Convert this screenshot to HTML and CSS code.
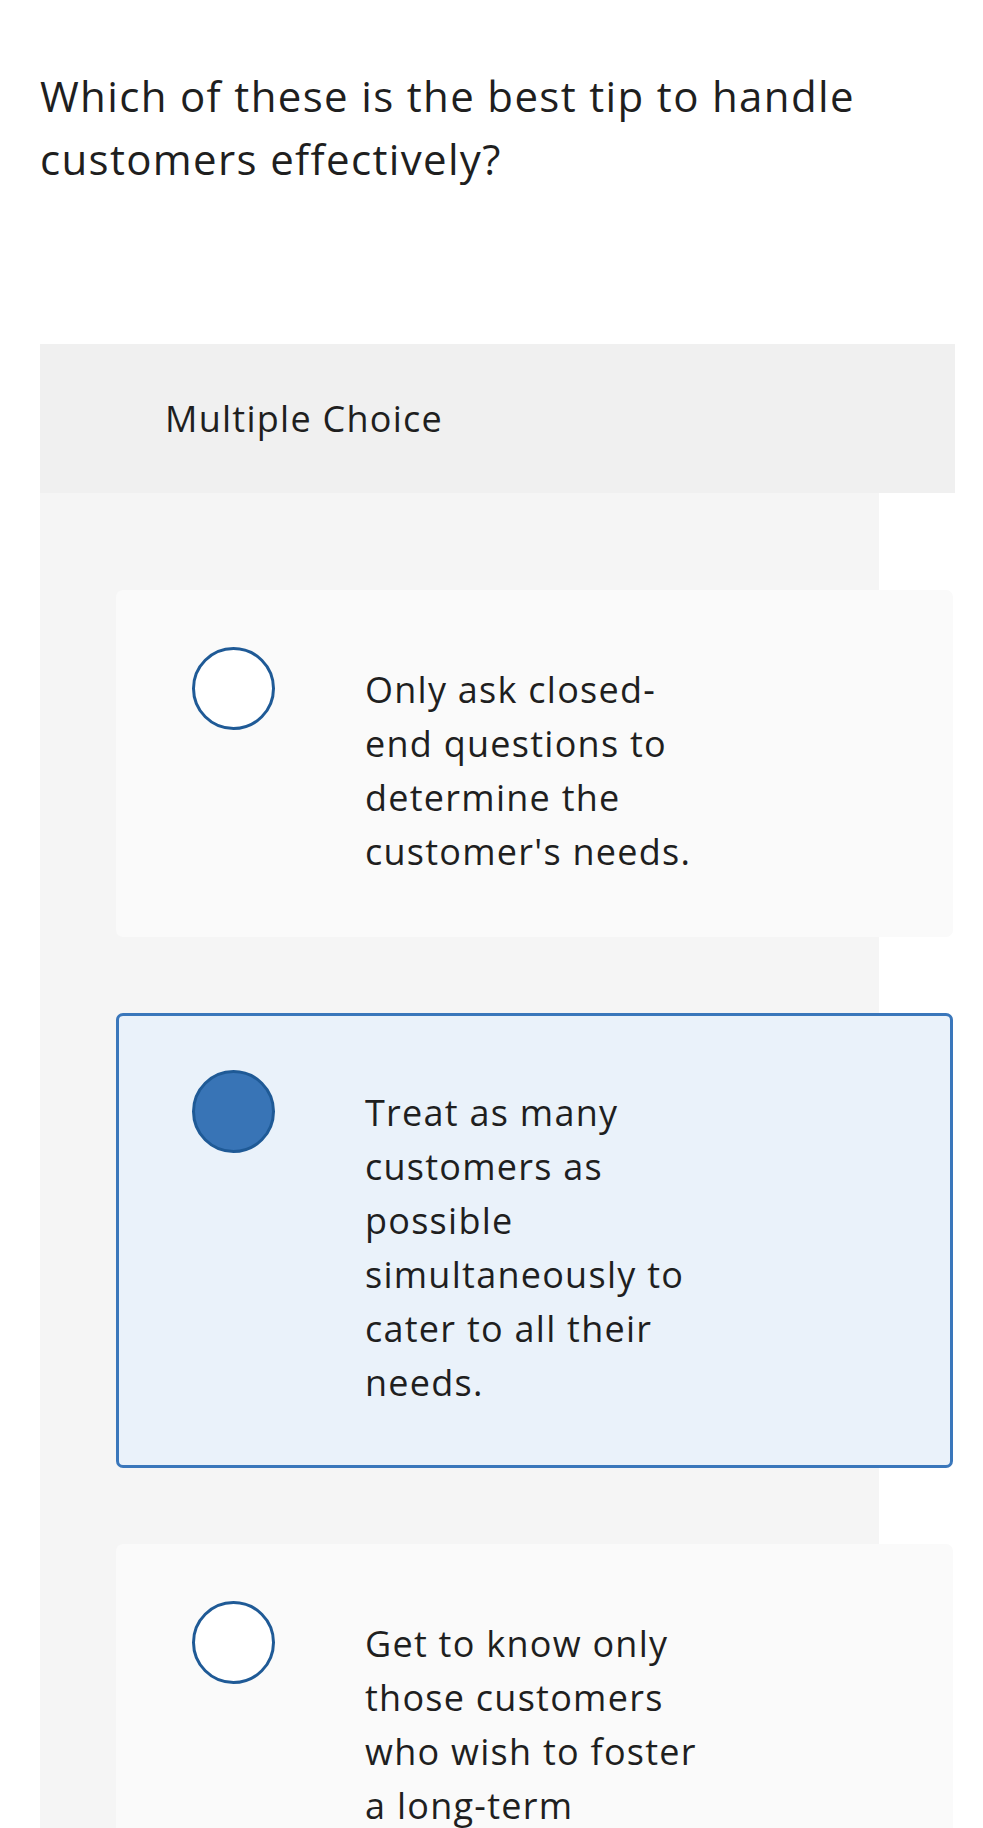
FILE: index.html
```html
<!DOCTYPE html>
<html lang="en">
<head>
<meta charset="utf-8">
<title>Question</title>
<link rel="stylesheet" href="styles.css">
</head>
<body>
<main class="page">
  <h1 class="question">Which of these is the best tip to handle customers effectively?</h1>
  <section class="quiz">
    <div class="quiz-header">Multiple Choice</div>
    <div class="quiz-body">
      <div class="option">
        <span class="radio"></span>
        <span class="option-text">Only ask closed-end questions to determine the customer's needs.</span>
      </div>
      <div class="option selected">
        <span class="radio"></span>
        <span class="option-text">Treat as many customers as possible simultaneously to cater to all their needs.</span>
      </div>
      <div class="option">
        <span class="radio"></span>
        <span class="option-text">Get to know only those customers who wish to foster a long-term relationship.</span>
      </div>
    </div>
  </section>
</main>
</body>
</html>
```

FILE: styles.css
```css
html, body {
  margin: 0;
  padding: 0;
  background: #ffffff;
}
body {
  font-family: "Open Sans", Lato, sans-serif;
  color: #1f1f1f;
  font-variant-ligatures: none;
}
.page {
  padding: 64px 28px 0 40px;
}
.question {
  margin: 0;
  font-size: 42px;
  font-weight: 400;
  line-height: 63px;
  letter-spacing: 0.032em;
  max-width: 860px;
}
.quiz {
  margin-top: 154px;
}
.quiz-header {
  background: #f0f0f0;
  font-size: 36px;
  line-height: 54px;
  letter-spacing: 0.035em;
  padding: 48px 0 47px 125px;
}
.quiz-body {
  background: #f5f5f5;
  width: 839px;
  padding: 97px 0 60px 76px;
  box-sizing: border-box;
  display: flex;
  flex-direction: column;
  gap: 76px;
}
.option {
  width: 837px;
  box-sizing: border-box;
  flex-shrink: 0;
  background: #fafafa;
  border: 3px solid transparent;
  border-radius: 7px;
  padding: 54px 0 55px 73px;
  display: flex;
  align-items: flex-start;
  gap: 90px;
}
.option.selected {
  background: #eaf2fa;
  border-color: #3a77bb;
}
.radio {
  flex: none;
  width: 83px;
  height: 83px;
  box-sizing: border-box;
  border-radius: 50%;
  border: 3px solid #1f5a96;
  background: #ffffff;
}
.selected .radio {
  background: #3874b6;
}
.option-text {
  width: 354px;
  padding-top: 16px;
  font-size: 36px;
  line-height: 54px;
  letter-spacing: 0.035em;
}
```
